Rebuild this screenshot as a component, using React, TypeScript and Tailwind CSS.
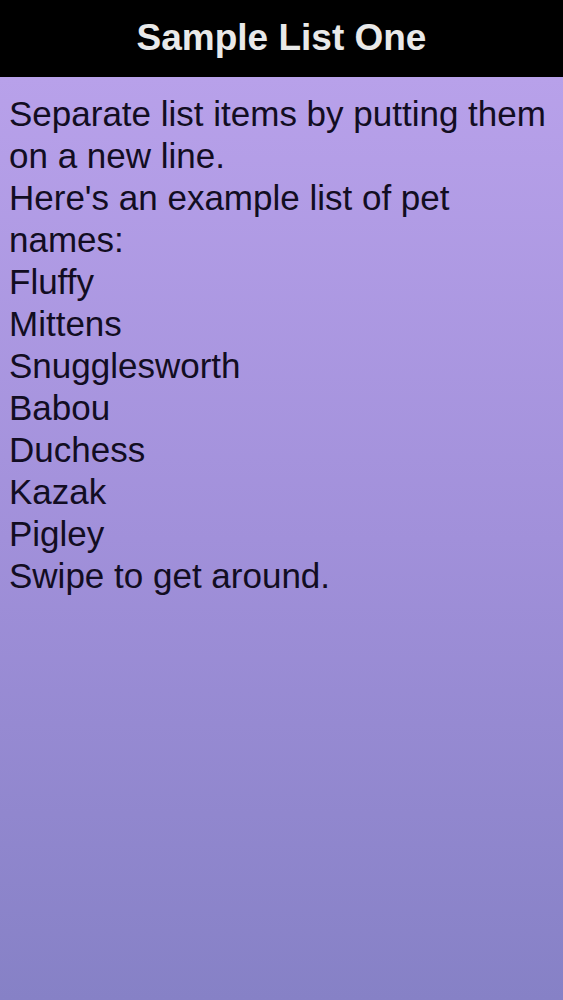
export default function App() {
  const lines = [
    "Separate list items by putting them",
    "on a new line.",
    "Here's an example list of pet",
    "names:",
    "Fluffy",
    "Mittens",
    "Snugglesworth",
    "Babou",
    "Duchess",
    "Kazak",
    "Pigley",
    "Swipe to get around.",
  ];
  return (
    <div
      className="w-[563px] h-[1000px] flex flex-col overflow-hidden"
      style={{ fontFamily: '"Liberation Sans", Arial, sans-serif' }}
    >
      <div className="h-[77px] bg-black flex items-center justify-center shrink-0">
        <span className="text-[37px] font-bold text-[#e9e9e9] leading-none pb-[2px]">
          Sample List One
        </span>
      </div>
      <div className="flex-1 bg-gradient-to-b from-[#b8a1ea] via-[#a190da] to-[#8681c6] pt-[16px] pl-[9px] pr-[4px]">
        {lines.map((l, i) => (
          <div key={i} className="text-[35px] leading-[42px] text-[#120d22] whitespace-nowrap">
            {l}
          </div>
        ))}
      </div>
    </div>
  );
}
